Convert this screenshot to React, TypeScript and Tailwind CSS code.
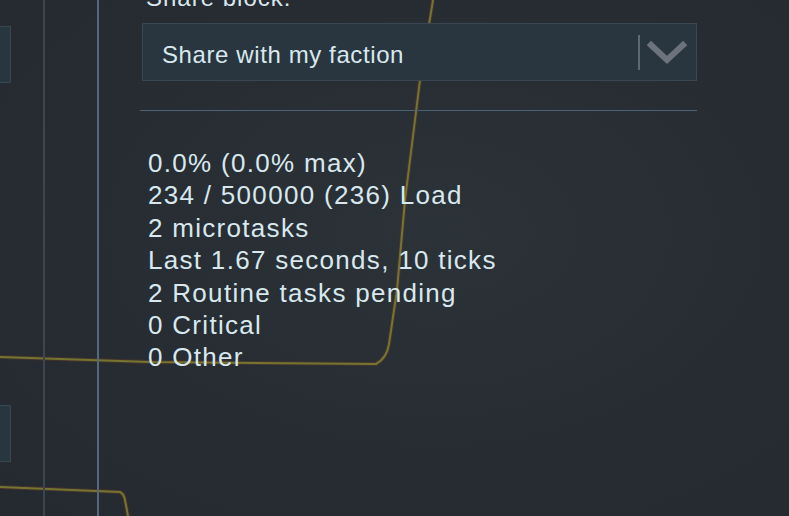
import React from "react";

const stats = [
  "0.0% (0.0% max)",
  "234 / 500000 (236) Load",
  "2 microtasks",
  "Last 1.67 seconds, 10 ticks",
  "2 Routine tasks pending",
  "0 Critical",
  "0 Other",
];

export default function App() {
  return (
    <div
      className="relative w-[789px] h-[516px] overflow-hidden bg-[#262c32] bg-[radial-gradient(ellipse_at_55%_45%,#2b3238_0%,#262c32_60%,#242a30_100%)] text-[#d8e8ee]"
      style={{ fontFamily: '"Liberation Sans", Arial, sans-serif' }}
    >
      <svg
        className="absolute inset-0 pointer-events-none"
        width="789"
        height="516"
        viewBox="0 0 789 516"
      >
        <g fill="none" strokeLinejoin="round">
          <path
            d="M433,0 L420,80 L405,200 L397,290 L389,344 Q387,358 376,364 L150,362 L0,357"
            stroke="#6b3a2a"
            strokeWidth="4"
            opacity="0.45"
          />
          <path
            d="M433,0 L420,80 L405,200 L397,290 L389,344 Q387,358 376,364 L150,362 L0,357"
            stroke="#74762f"
            strokeWidth="2"
          />
          <path
            d="M0,487 L120,492 Q124,494 125,500 L128,516"
            stroke="#6b3a2a"
            strokeWidth="4"
            opacity="0.45"
          />
          <path
            d="M0,487 L120,492 Q124,494 125,500 L128,516"
            stroke="#74762f"
            strokeWidth="2"
          />
        </g>
      </svg>

      <div className="relative flex h-full">
        <div className="w-[11px] flex flex-col">
          <div className="mt-[26px] h-[57px] border border-l-0 border-[#3a4752] bg-[#283640]" />
          <div className="mt-[322px] h-[57px] border border-l-0 border-[#3a4752] bg-[#283640]" />
        </div>
        <div className="ml-[32px] w-[2px] h-full bg-[#3c4651]" />
        <div className="ml-[52px] w-[2px] h-full bg-[#55677a]" />
        <div className="ml-[41px] w-[557px] flex flex-col">
          <div className="ml-[6px] -mt-[15px] h-[26px] text-[24px] leading-[26px] tracking-[1px]">
            Share block:
          </div>
          <div className="ml-[2px] mt-[12px] h-[58px] flex items-center border border-[#3a4651] bg-[#29363f]">
            <span className="ml-[19px] pt-[5px] text-[24px] leading-none tracking-[0.6px] flex-1">
              Share with my faction
            </span>
            <div className="w-[2px] h-[35px] bg-[#5d6a74]" />
            <svg width="56" height="32" viewBox="0 0 56 32" className="shrink-0">
              <path
                d="M11,9 L27,24 L43,9"
                fill="none"
                stroke="#6c737c"
                strokeWidth="6"
                strokeLinecap="square"
                strokeLinejoin="miter"
              />
            </svg>
          </div>
          <div className="mt-[29px] h-px bg-[#4d6275]" />
          <div className="ml-[8px] mt-[36px] flex flex-col text-[26px] leading-[32.4px] tracking-[1.3px]">
            {stats.map((s) => (
              <div key={s}>{s}</div>
            ))}
          </div>
        </div>
      </div>
    </div>
  );
}
